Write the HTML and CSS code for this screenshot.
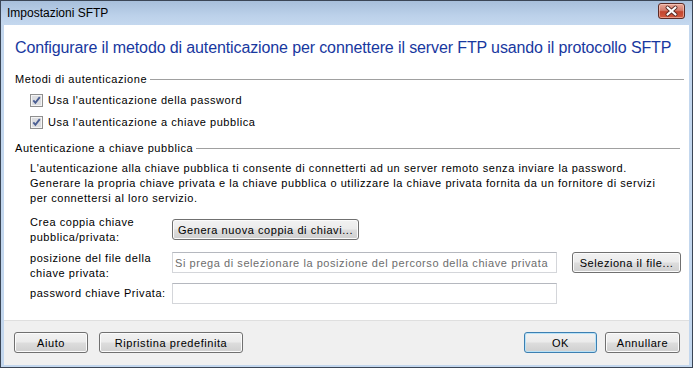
FILE: index.html
```html
<!DOCTYPE html>
<html lang="it">

<head>
    <meta charset="UTF-8">
    <meta name="viewport" content="width=device-width, initial-scale=1.0">
    <title>Impostazioni SFTP</title>

    <link rel="stylesheet" href="styles.css">
</head>

<body>

    <div class="window">
        <div class="titlebar">
            <span class="title">Impostazioni SFTP</span>
            <button class="close" type="button">
                <svg width="27" height="16" viewBox="0 0 27 16">
                    <path d="M9.5 4.5 L17.5 11.5 M17.5 4.5 L9.5 11.5" stroke="#5a2a24" stroke-width="4" stroke-linecap="round" fill="none" />
                    <path d="M9.5 4.5 L17.5 11.5 M17.5 4.5 L9.5 11.5" stroke="#ffffff" stroke-width="2.2" stroke-linecap="round" fill="none" />
                </svg>
            </button>
        </div>

        <div class="client">
            <div class="content">
                <h1 class="instruction">Configurare il metodo di autenticazione per connettere il server FTP usando il protocollo SFTP</h1>

                <!-- auth methods -->
                <section class="group group-methods">
                    <div class="group-title"><span>Metodi di autenticazione</span></div>

                    <label class="check">
                        <span class="box">
                            <svg width="13" height="13" viewBox="0 0 13 13">
                                <rect x="0.5" y="0.5" width="12" height="12" fill="#f4f4f4" stroke="#8f8f8f" />
                                <rect x="2" y="2" width="9" height="9" fill="#dcdde0" />
                                <path d="M3.3 6.4 L5.4 8.8 L9.8 3.2" stroke="#4b5f93" stroke-width="1.9" fill="none" />
                            </svg>
                        </span>
                        Usa l'autenticazione della password
                    </label>

                    <label class="check">
                        <span class="box">
                            <svg width="13" height="13" viewBox="0 0 13 13">
                                <rect x="0.5" y="0.5" width="12" height="12" fill="#f4f4f4" stroke="#8f8f8f" />
                                <rect x="2" y="2" width="9" height="9" fill="#dcdde0" />
                                <path d="M3.3 6.4 L5.4 8.8 L9.8 3.2" stroke="#4b5f93" stroke-width="1.9" fill="none" />
                            </svg>
                        </span>
                        Usa l'autenticazione a chiave pubblica
                    </label>
                </section>

                <!-- public key -->
                <section class="group group-key">
                    <div class="group-title"><span>Autenticazione a chiave pubblica</span></div>

                    <p class="hint">
                        L'autenticazione alla chiave pubblica ti consente di connetterti ad un server remoto senza inviare la password.<br>
                        Generare la propria chiave privata e la chiave pubblica o utilizzare la chiave privata fornita da un fornitore di servizi<br>
                        per connettersi al loro servizio.
                    </p>

                    <div class="row row-create">
                        <span class="row-label">Crea coppia chiave<br>pubblica/privata:</span>
                        <button class="btn btn-generate" type="button">Genera nuova coppia di chiavi...</button>
                    </div>

                    <div class="row row-path">
                        <span class="row-label">posizione del file della<br>chiave privata:</span>
                        <input class="textbox" type="text" placeholder="Si prega di selezionare la posizione del percorso della chiave privata">
                        <button class="btn btn-browse" type="button">Seleziona il file...</button>
                    </div>

                    <div class="row row-password">
                        <span class="row-label">password chiave Privata:</span>
                        <input class="textbox" type="password">
                    </div>
                </section>
            </div>

            <div class="footer">
                <button class="btn btn-help" type="button">Aiuto</button>
                <button class="btn btn-reset" type="button">Ripristina predefinita</button>
                <span class="spacer"></span>
                <button class="btn btn-ok" type="button">OK</button>
                <button class="btn btn-cancel" type="button">Annullare</button>
            </div>
        </div>
    </div>

</body>

</html>
```

FILE: styles.css
```css
body {
    margin: 0;
    font: 11px "Liberation Sans", Arial, sans-serif;
    letter-spacing: 0.56px;
    color: #000;
    background: #fff;
}

/* window frame */
.window {
    width: 693px;
    height: 368px;
    box-sizing: border-box;
    border: 1px solid #3b4656;
    background: #c3d7ee;
    display: flex;
    flex-direction: column;
}

.titlebar {
    height: 24px;
    flex: none;
    display: flex;
    align-items: center;
    padding: 0 7px 0 6px;
    background: linear-gradient(#a7bfdb, #bcd1ea 60%, #c4d8ef);
}

.title {
    flex: 1;
    font-size: 12px;
    letter-spacing: 0;
    color: #000;
}

.close {
    appearance: none;
    width: 27px;
    height: 16px;
    padding: 0;
    margin-top: -5px;
    border: 1px solid #5b2b26;
    border-radius: 3px;
    background: linear-gradient(#e9a99a, #d47d6d 45%, #c2452f 55%, #d35a3f);
    box-shadow: inset 0 0 0 1px rgba(255, 220, 210, 0.5);
    display: flex;
    align-items: center;
    justify-content: center;
}

.close svg {
    display: block;
    margin: -1px;
}

.client {
    flex: 1;
    margin: 0 3px 2px 3px;
    background: #fff;
    display: flex;
    flex-direction: column;
}

.content {
    flex: 1;
    padding: 0 5px 0 11px;
}

/* main instruction */
.instruction {
    margin: 13px 0 0;
    font-family: "Liberation Sans", Arial, sans-serif;
    font-size: 16px;
    font-weight: normal;
    line-height: 19px;
    letter-spacing: -0.12px;
    color: #1838a0;
}

/* group headers with a line */
.group-title {
    display: flex;
    align-items: center;
    line-height: 13px;
}

.group-title::after {
    content: "";
    flex: 1;
    height: 1px;
    margin-left: 3px;
    background: #a0a0a0;
}

.group-methods {
    margin-top: 16px;
}

.group-key {
    margin-top: 13px;
}

.group-key .group-title::after {
    margin-right: 4px;
}

.check {
    display: flex;
    align-items: center;
    height: 13px;
    line-height: 13px;
    margin: 8px 0 0 15px;
}

.check + .check {
    margin-top: 9px;
}

.box {
    width: 13px;
    height: 13px;
    margin-right: 5px;
}

.box svg {
    display: block;
}

.hint {
    margin: 6px 0 0 15px;
    line-height: 15px;
}

/* label + field rows */
.row {
    display: flex;
    align-items: flex-start;
    margin-left: 15px;
}

.row-label {
    width: 142px;
    flex: none;
    line-height: 15px;
}

.row-create {
    margin-top: 9px;
}

.row-create .btn {
    margin-top: 4px;
}

.row-path {
    margin-top: 6px;
}

.row-path .textbox,
.row-path .btn {
    margin-top: 1px;
}

.row-password {
    margin-top: 2px;
    align-items: center;
}

.textbox {
    width: 385px;
    height: 21px;
    box-sizing: border-box;
    margin: 0;
    padding: 0 2px;
    border: 1px solid #d4d6da;
    border-top-color: #b5b8bf;
    font: 11px "Liberation Sans", Arial, sans-serif;
    letter-spacing: 0.56px;
    color: #000;
    outline: none;
}

.textbox::placeholder {
    color: #6d6d6d;
}

/* windows 7 style buttons */
.btn {
    appearance: none;
    height: 21px;
    box-sizing: border-box;
    padding: 0 4px;
    border: 1px solid #707070;
    border-radius: 3px;
    background: linear-gradient(#f2f2f2, #ebebeb 48%, #dddddd 52%, #cfcfcf);
    box-shadow: inset 0 0 0 1px #fbfbfb;
    font: 11px "Liberation Sans", Arial, sans-serif;
    letter-spacing: 0.56px;
    color: #000;
    white-space: nowrap;
}

.btn-generate {
    width: 187px;
}

.btn-browse {
    width: 109px;
    margin-left: 15px;
}

.footer {
    flex: none;
    border-top: 1px solid #dfdfdf;
    background: #f0f0f0;
    display: flex;
    align-items: flex-start;
    padding: 11px 9px 0 10px;
    box-sizing: border-box;
    height: 45px;
}

.spacer {
    flex: 1;
}

.btn-help {
    width: 74px;
}

.btn-reset {
    width: 144px;
    margin-left: 11px;
}

.btn-ok {
    width: 73px;
    border-color: #3c7fb1;
    box-shadow: inset 0 0 0 1px #b9e2f7;
}

.btn-cancel {
    width: 75px;
    margin-left: 8px;
}
```
